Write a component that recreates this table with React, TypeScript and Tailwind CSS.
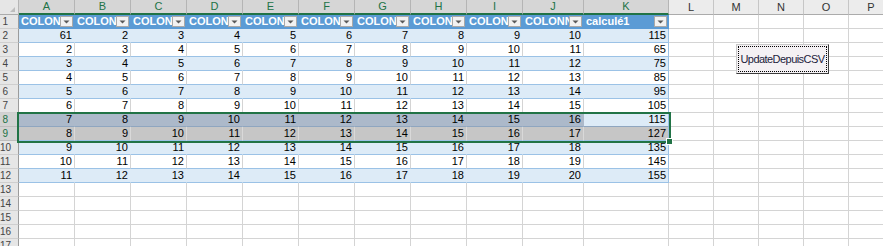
import React from "react";

// Column layout of the sheet: row-number gutter, table columns A..K, free columns L..P
const TABLE_COLS: { letter: string; w: string }[] = [
  { letter: "A", w: "w-[56px]" },
  { letter: "B", w: "w-[56px]" },
  { letter: "C", w: "w-[56px]" },
  { letter: "D", w: "w-[56px]" },
  { letter: "E", w: "w-[56px]" },
  { letter: "F", w: "w-[56px]" },
  { letter: "G", w: "w-[56px]" },
  { letter: "H", w: "w-[56px]" },
  { letter: "I", w: "w-[56px]" },
  { letter: "J", w: "w-[61px]" },
  { letter: "K", w: "w-[85px]" },
];
const FREE_COLS = ["L", "M", "N", "O", "P"];

const HEADERS = [
  "COLONNE1",
  "COLONNE2",
  "COLONNE3",
  "COLONNE4",
  "COLONNE5",
  "COLONNE6",
  "COLONNE7",
  "COLONNE8",
  "COLONNE9",
  "COLONNE10",
  "calculé1",
];

const TOTALS = [115, 65, 75, 85, 95, 105, 115, 127, 135, 145, 155];

// rows 2..12 of the table
const DATA: number[][] = TOTALS.map((total, i) => {
  const row: number[] = [];
  for (let c = 0; c < 10; c++) row.push(i + 1 + c);
  if (i === 0) row[0] = 61;
  row.push(total);
  return row;
});

function RowLabel({ n, selected }: { n: number; selected?: boolean }) {
  return (
    <div
      className={
        selected
          ? "w-[19px] shrink-0 border-r border-b border-r-[#9b9b9b] border-b-[#bdbdbd] bg-[#d2d2d2] text-[#217346] text-[10px] leading-[13px] text-right pr-[10px]"
          : "w-[19px] shrink-0 border-r border-b border-r-[#9b9b9b] border-b-[#cfcfcf] bg-[#e6e6e6] text-[#444444] text-[10px] leading-[13px] text-right pr-[10px]"
      }
    >
      {n}
    </div>
  );
}

function FreeCells() {
  return (
    <>
      {FREE_COLS.map((l) => (
        <div
          key={l}
          className="w-[45px] shrink-0 border-r border-b border-r-[#d4d4d4] border-b-[#d4d4d4] bg-white"
        />
      ))}
    </>
  );
}

function FilterButton() {
  return (
    <div className="w-[13px] h-[11px] mr-[1px] shrink-0 box-border border border-[#a9a9a9] bg-[#f2f2f2] flex items-center justify-center">
      <svg width="7" height="4" viewBox="0 0 7 4">
        <polygon points="0.5,0.5 6.5,0.5 3.5,3.5" fill="#595959" />
      </svg>
    </div>
  );
}

function ColumnLetters() {
  return (
    <div className="flex h-[15px]">
      <div className="w-[19px] shrink-0 border-r border-b border-r-[#b5b5b5] border-b-[#ababab] bg-[#e6e6e6] relative">
        <svg className="absolute left-0 top-0" width="18" height="14" viewBox="0 0 18 14">
          <polygon points="15,7 15,12 10,12" fill="#bdbdbd" />
        </svg>
      </div>
      {TABLE_COLS.map((c) => (
        <div
          key={c.letter}
          className={
            c.w +
            " shrink-0 border-r border-b-2 border-r-[#b5b5b5] border-b-[#217346] bg-[#d6d6d6] text-[#217346] text-[11px] leading-[13px] text-center"
          }
        >
          {c.letter}
        </div>
      ))}
      {FREE_COLS.map((l) => (
        <div
          key={l}
          className="w-[45px] shrink-0 border-r border-b border-r-[#c6c6c6] border-b-[#ababab] bg-[#ececec] text-[#333333] text-[11px] leading-[14px] text-center"
        >
          {l}
        </div>
      ))}
    </div>
  );
}

function TableHeaderRow() {
  return (
    <div className="flex h-[14px]">
      <RowLabel n={1} />
      {TABLE_COLS.map((c, i) => (
        <div
          key={c.letter}
          className={
            c.w +
            " shrink-0 border-r border-b border-r-[#5b9bd5] border-b-[#5b9bd5] bg-[#5b9bd5] flex items-center"
          }
        >
          <div className="flex-1 min-w-0 overflow-hidden whitespace-nowrap pl-[2px] text-white font-bold text-[11px] leading-[13px]">
            {HEADERS[i]}
          </div>
          <FilterButton />
        </div>
      ))}
      <FreeCells />
    </div>
  );
}

function cellClass(rowNo: number, col: number): string {
  const isK = col === 10;
  if (rowNo === 8) {
    if (isK)
      return "border-r border-b border-r-[#9bc2e6] border-b-[#8fa6c0] bg-[#ddebf7]";
    return "border-r border-b border-r-[#acb9ca] border-b-[#8fa6c0] bg-[#acb9ca]";
  }
  if (rowNo === 9) {
    if (isK)
      return "border-r border-b border-r-[#9bc2e6] border-b-[#9bc2e6] bg-[#c6c6c6]";
    return "border-r border-b border-r-[#d9d9d9] border-b-[#9bc2e6] bg-[#c6c6c6]";
  }
  const band = rowNo % 2 === 0;
  if (band) {
    if (isK)
      return "border-r border-b border-r-[#9bc2e6] border-b-[#9bc2e6] bg-[#ddebf7]";
    return "border-r border-b border-r-[#ddebf7] border-b-[#9bc2e6] bg-[#ddebf7]";
  }
  if (isK)
    return "border-r border-b border-r-[#9bc2e6] border-b-[#9bc2e6] bg-white";
  return "border-r border-b border-r-[#d4d4d4] border-b-[#9bc2e6] bg-white";
}

function DataRow({ rowNo, values }: { rowNo: number; values: number[] }) {
  const selected = rowNo === 8 || rowNo === 9;
  return (
    <div className="flex h-[14px]">
      <RowLabel n={rowNo} selected={selected} />
      {TABLE_COLS.map((c, i) => (
        <div
          key={c.letter}
          className={
            c.w +
            " shrink-0 text-right pr-[2px] text-[11px] leading-[13px] text-black " +
            cellClass(rowNo, i)
          }
        >
          {values[i]}
        </div>
      ))}
      <FreeCells />
    </div>
  );
}

function EmptyRow({ rowNo }: { rowNo: number }) {
  return (
    <div className="flex h-[14px]">
      <RowLabel n={rowNo} />
      {TABLE_COLS.map((c) => (
        <div
          key={c.letter}
          className={
            c.w +
            " shrink-0 border-r border-b border-r-[#d4d4d4] border-b-[#d4d4d4] bg-white"
          }
        />
      ))}
      <FreeCells />
    </div>
  );
}

export default function App() {
  return (
    <div className="relative w-[883px] h-[246px] overflow-hidden bg-white font-['Liberation_Sans',Arial,sans-serif]">
      <div className="w-[894px]">
        <ColumnLetters />
        <TableHeaderRow />
        {DATA.map((vals, i) => (
          <DataRow key={i} rowNo={i + 2} values={vals} />
        ))}
        {[13, 14, 15, 16, 17].map((n) => (
          <EmptyRow key={n} rowNo={n} />
        ))}
      </div>

      {/* selected range A8:K9 */}
      <div className="absolute left-[17px] top-[112px] w-[654px] h-[31px] border-2 border-[#217346] pointer-events-none" />
      <div className="absolute left-[666px] top-[138px] w-[7px] h-[7px] bg-[#217346] border border-white" />

      {/* form button placed on the sheet */}
      <div className="absolute left-[736px] top-[44px] w-[93px] h-[30px] bg-[#f4f1f4] border border-t-[#c8c8c8] border-l-[#c8c8c8] border-r-[#3c3c3c] border-b-[#3c3c3c] p-[1px]">
        <div className="h-full border border-dotted border-black flex items-center justify-center text-[11px] tracking-[-0.55px] text-[#1c1c3c] whitespace-nowrap">
          UpdateDepuisCSV
        </div>
      </div>
    </div>
  );
}
